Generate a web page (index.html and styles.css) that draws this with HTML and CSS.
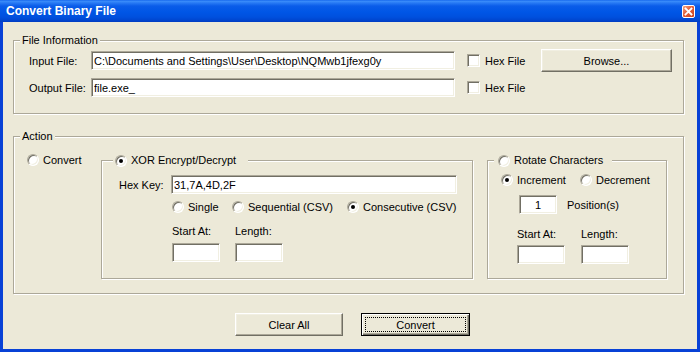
FILE: index.html
```html
<!DOCTYPE html>
<html lang="en">
<head>
    <meta charset="UTF-8">
    <title>Convert Binary File</title>
    <link rel="stylesheet" href="styles.css">
</head>
<body>
<div class="window">
    <!-- title bar -->
    <div class="titlebar">
        <span class="title">Convert Binary File</span>
        <span class="close">
            <svg width="9" height="9" viewBox="0 0 9 9"><path d="M1.5 1.5 L7.5 7.5 M7.5 1.5 L1.5 7.5" stroke="#fff" stroke-width="1.8" stroke-linecap="square"/></svg>
        </span>
    </div>

    <div class="client">
        <!-- File Information -->
        <fieldset class="group file-info">
            <legend>File Information</legend>
            <div class="file-grid">
                <span class="lbl">Input File:</span>
                <input class="edit" type="text" value="C:\Documents and Settings\User\Desktop\NQMwb1jfexg0y">
                <label class="check"><span class="box"></span>Hex File</label>
                <button class="btn">Browse...</button>
                <span class="lbl">Output File:</span>
                <input class="edit" type="text" value="file.exe_">
                <label class="check"><span class="box"></span>Hex File</label>
            </div>
        </fieldset>

        <!-- Action -->
        <fieldset class="group action">
            <legend>Action</legend>
            <div class="action-body">
                <label class="opt convert"><span class="radio"></span>Convert</label>

                <fieldset class="group sub xor">
                    <legend><label class="opt"><span class="radio on"></span>XOR Encrypt/Decrypt</label></legend>
                    <div class="xor-body">
                        <div class="key-row">
                            <span class="lbl">Hex Key:</span>
                            <input class="edit" type="text" value="31,7A,4D,2F">
                        </div>
                        <div class="mode-row">
                            <label class="opt single"><span class="radio"></span>Single</label>
                            <label class="opt sequential"><span class="radio"></span>Sequential (CSV)</label>
                            <label class="opt"><span class="radio on"></span>Consecutive (CSV)</label>
                        </div>
                        <div class="fields">
                            <div class="field">
                                <span>Start At:</span>
                                <input class="edit" type="text" value="">
                            </div>
                            <div class="field">
                                <span>Length:</span>
                                <input class="edit" type="text" value="">
                            </div>
                        </div>
                    </div>
                </fieldset>

                <fieldset class="group sub rotate">
                    <legend><label class="opt"><span class="radio"></span>Rotate Characters</label></legend>
                    <div class="rotate-body">
                        <div class="dir-row">
                            <label class="opt increment"><span class="radio on"></span>Increment</label>
                            <label class="opt"><span class="radio"></span>Decrement</label>
                        </div>
                        <div class="pos-row">
                            <input class="edit pos" type="text" value="1">
                            <span>Position(s)</span>
                        </div>
                        <div class="fields">
                            <div class="field">
                                <span>Start At:</span>
                                <input class="edit" type="text" value="">
                            </div>
                            <div class="field">
                                <span>Length:</span>
                                <input class="edit" type="text" value="">
                            </div>
                        </div>
                    </div>
                </fieldset>
            </div>
        </fieldset>

        <!-- buttons -->
        <div class="buttons">
            <button class="btn clear">Clear All</button>
            <button class="btn default"><span class="focus">Convert</span></button>
        </div>
    </div>
</div>
</body>
</html>
```

FILE: styles.css
```css
* {
    box-sizing: border-box;
}

body {
    margin: 0;
    font: 11px "Liberation Sans", Arial, sans-serif;
    color: #000;
    background: #fff;
}

.window {
    width: 700px;
    height: 352px;
    display: flex;
    flex-direction: column;
}

/* title bar */
.titlebar {
    flex: none;
    height: 22px;
    display: flex;
    align-items: center;
    justify-content: space-between;
    padding: 0 5px 0 6px;
    background: linear-gradient(#0a5be8 0, #3d8ffb 1px, #2779f4 3px, #0a5ce9 6px, #0056e6 12px, #0050de 17px, #0046d0 20px, #003cc2 22px);
}

.title {
    color: #fff;
    font-weight: bold;
    font-size: 12px;
}

.close {
    width: 13px;
    height: 13px;
    display: flex;
    align-items: center;
    justify-content: center;
    border: 1px solid #fff;
    border-radius: 2px;
    background: linear-gradient(135deg, #f4a483, #e2603a 45%, #c9421d);
}

/* client area */
.client {
    flex: 1;
    background: #ece9d8;
    border: 3px solid #0841d6;
    border-top: 0;
    padding: 12px 13px 0 10px;
}

.group {
    margin: 0;
    padding: 0;
    min-width: 0;
    border: 1px solid #aca899;
    box-shadow: inset 1px 1px #fff, 1px 1px #fff;
}

.group > legend {
    margin-left: 6px;
    padding: 0 2px;
    line-height: 13px;
    background: #ece9d8;
}

.file-grid {
    display: grid;
    grid-template-columns: 62px 364px 86px 131px;
    grid-template-rows: 23px 19px;
    row-gap: 6px;
    align-items: center;
    padding: 2px 11px 16px 15px;
}

.edit {
    height: 19px;
    margin: 0;
    padding: 0 2px;
    font: inherit;
    color: #000;
    background: #fff;
    border: 1px solid;
    border-color: #aca899 #fff #fff #aca899;
    box-shadow: inset 1px 1px #716f64, inset -1px -1px #f1efe2;
    outline: none;
}

.check {
    display: flex;
    align-items: center;
    padding-left: 12px;
}

.box {
    width: 13px;
    height: 13px;
    margin-right: 5px;
    background: #fff;
    border: 1px solid;
    border-color: #aca899 #fff #fff #aca899;
    box-shadow: inset 1px 1px #716f64, inset -1px -1px #f1efe2;
}

.btn {
    height: 23px;
    margin: 0;
    padding: 0;
    font: inherit;
    color: #000;
    background: #ece9d8;
    border: 1px solid;
    border-color: #fff #716f64 #716f64 #fff;
    box-shadow: inset -1px -1px #aca899, inset 1px 1px #f1efe2;
}

/* radios */
.opt {
    display: flex;
    align-items: center;
    height: 13px;
}

.radio {
    flex: none;
    width: 12px;
    height: 12px;
    margin-right: 4px;
    display: flex;
    align-items: center;
    justify-content: center;
    border-radius: 50%;
    background: #fff;
    border: 1px solid;
    border-color: #aca899 #fff #fff #aca899;
    box-shadow: inset 1px 1px #716f64, inset -1px -1px #f1efe2;
}

.radio.on::after {
    content: '';
    width: 4px;
    height: 4px;
    border-radius: 50%;
    background: #000;
}

/* action group */
.action {
    margin-top: 16px;
}

.action-body {
    display: flex;
    align-items: flex-start;
    padding: 11px 16px 14px 13px;
}

.convert {
    width: 74px;
    margin-top: -1px;
}

.sub > legend {
    margin-left: 11px;
    padding: 0 12px 0 2px;
}

.xor {
    width: 372px;
}

.rotate {
    width: 180px;
    margin-left: 14px;
}

.rotate > legend {
    margin-left: 6px;
    padding: 0 9px 0 4px;
}

.xor-body {
    padding: 8px 15px 16px 17px;
}

.key-row {
    display: flex;
    align-items: center;
}

.key-row .lbl {
    width: 52px;
}

.key-row .edit {
    width: 286px;
}

.mode-row {
    display: flex;
    margin: 6px 0 0 53px;
}

.single {
    width: 60px;
}

.sequential {
    width: 115px;
}

.fields {
    display: flex;
    margin: 12px 0 0 53px;
}

.field {
    width: 63px;
    display: flex;
    flex-direction: column;
    gap: 5px;
    line-height: 13px;
}

.field .edit {
    width: 48px;
}

.rotate-body {
    padding: 6px 0 14px 13px;
}

.dir-row {
    display: flex;
}

.increment {
    width: 79px;
}

.pos-row {
    display: flex;
    align-items: center;
    margin: 9px 0 0 18px;
}

.pos {
    width: 38px;
    text-align: center;
    margin-right: 10px;
}

.rotate .fields {
    margin: 14px 0 0 16px;
}

.rotate .field {
    width: 64px;
    gap: 4px;
}

/* bottom buttons */
.buttons {
    display: flex;
    gap: 18px;
    margin-top: 19px;
    padding-left: 222px;
}

.clear {
    width: 108px;
}

.btn.default {
    width: 109px;
    display: flex;
    border-color: #000;
    box-shadow: inset 1px 1px #fff, inset -1px -1px #716f64, inset -2px -2px #aca899;
}

.focus {
    flex: 1;
    margin: 3px;
    display: flex;
    align-items: center;
    justify-content: center;
    border: 1px dotted #000;
}
```
